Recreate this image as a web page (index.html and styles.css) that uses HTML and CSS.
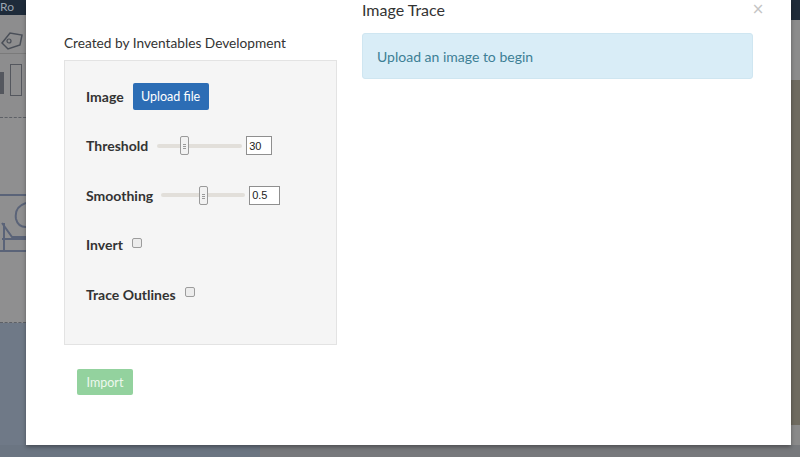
FILE: index.html
```html
<!DOCTYPE html>
<html lang="en">
<head>
    <meta charset="UTF-8">
    <meta name="viewport" content="width=device-width, initial-scale=1.0">
    <title>Image Trace</title>
    <link rel="stylesheet" href="styles.css">
</head>
<body>

    <div class="screen">
        <!-- dimmed app behind the modal -->
        <div class="app-left">
            <div class="app-topbar">Ro</div>
            <div class="app-toolbar">
                <svg width="26" height="38" viewBox="0 0 26 38">
                    <path d="M2 28 L10 18 L22 20 L20 30 L8 34 Z" fill="none" stroke="#4a4f58" stroke-width="1.5"/>
                    <circle cx="9" cy="26" r="2" fill="none" stroke="#4a4f58" stroke-width="1.2"/>
                </svg>
            </div>
            <div class="app-tools">
                <span class="tool-a"></span>
                <span class="tool-b"></span>
            </div>
            <div class="app-canvas">
                <svg width="26" height="90" viewBox="0 0 26 90">
                    <path d="M0 22 L26 22 M0 78 L26 78" stroke="#5a6378" stroke-width="2"/>
                    <path d="M26 30 Q14 34 16 46 Q18 54 26 54" fill="none" stroke="#5a6378" stroke-width="2"/>
                    <path d="M2 50 L12 64 L26 64 M2 66 L26 66 M4 50 L4 78" fill="none" stroke="#5a6378" stroke-width="2"/>
                </svg>
            </div>
            <div class="app-footer"></div>
        </div>

        <div class="modal">
            <button class="close" type="button">&times;</button>

            <div class="col-left">
                <p class="credit">Created by Inventables Development</p>

                <div class="panel">
                    <div class="row">
                        <label>Image</label>
                        <button class="btn btn-primary" type="button">Upload file</button>
                    </div>
                    <div class="row">
                        <label for="threshold">Threshold</label>
                        <input class="slider slider-threshold" type="range" id="threshold" min="0" max="100" value="30">
                        <input class="num num-threshold" type="text" value="30">
                    </div>
                    <div class="row">
                        <label for="smoothing">Smoothing</label>
                        <input class="slider slider-smoothing" type="range" id="smoothing" min="0" max="1" step="0.1" value="0.5">
                        <input class="num num-smoothing" type="text" value="0.5">
                    </div>
                    <div class="row">
                        <label for="invert">Invert</label>
                        <input class="check" type="checkbox" id="invert">
                    </div>
                    <div class="row">
                        <label for="outlines">Trace Outlines</label>
                        <input class="check" type="checkbox" id="outlines">
                    </div>
                </div>

                <button class="btn btn-success" type="button" disabled>Import</button>
            </div>

            <div class="col-right">
                <h4 class="title">Image Trace</h4>
                <div class="alert">Upload an image to begin</div>
            </div>
        </div>

        <div class="app-right">
            <div class="r-top"></div>
            <div class="r-gray"></div>
            <div class="r-brown"></div>
            <div class="r-bottom"></div>
        </div>
    </div>

    <div class="app-bottom">
        <div class="b-left"></div>
        <div class="b-right"></div>
    </div>

</body>
</html>
```

FILE: styles.css
```css
html, body {
    margin: 0;
    padding: 0;
}

body {
    font-family: Lato, "Open Sans", sans-serif;
    width: 800px;
    height: 457px;
    overflow: hidden;
    background-color: #6c7682;
    color: #333;
}

.screen {
    display: flex;
    height: 445px;
}

/* ---- app behind the modal ---- */

.app-left {
    width: 26px;
    display: flex;
    flex-direction: column;
    background-color: #8d8d8e;
}

.app-topbar {
    height: 15px;
    background-color: #1e2b3a;
    color: #9aa4b0;
    font-size: 12px;
    line-height: 14px;
    overflow: hidden;
}

.app-toolbar {
    height: 38px;
    border-bottom: 1px solid #7a7a7a;
}

.app-tools {
    height: 64px;
    display: flex;
    gap: 6px;
    padding-top: 10px;
    box-sizing: border-box;
    border-bottom: 1px dashed #5d6066;
}

.tool-a {
    width: 4px;
    height: 22px;
    margin-top: 8px;
    background-color: #54575e;
}

.tool-b {
    width: 10px;
    height: 30px;
    border: 1px solid #54575e;
}

.app-canvas {
    height: 205px;
    padding-top: 55px;
    box-sizing: border-box;
    border-bottom: 1px dashed #5d6066;
    background-color: #8f8f90;
}

.app-footer {
    flex: 1;
    background-color: #6f7987;
}

.app-right {
    width: 9px;
    display: flex;
    flex-direction: column;
}

.r-top {
    height: 20px;
    background-color: #1f2b39;
}

.r-gray {
    height: 60px;
    background-color: #8c8c8c;
}

.r-brown {
    height: 345px;
    background-color: #6f6b60;
}

.r-bottom {
    flex: 1;
    background-color: #8a8a8a;
}

.app-bottom {
    display: flex;
    height: 12px;
}

.b-left {
    width: 260px;
    background-color: #6b7582;
}

.b-right {
    flex: 1;
    background-color: #77797c;
}

/* ---- modal ---- */

.modal {
    position: relative;
    width: 766px;
    background: white;
    display: flex;
    gap: 25px;
    padding: 0 38px;
    box-sizing: border-box;
    box-shadow: 0 2px 4px rgba(0, 0, 0, 0.35);
}

.close {
    position: absolute;
    top: 0;
    right: 24px;
    width: 18px;
    height: 18px;
    border: none;
    background: none;
    padding: 0;
    font-family: "DejaVu Sans", sans-serif;
    font-size: 15px;
    line-height: 17px;
    text-align: center;
    color: #c4c4c4;
}

.col-left {
    width: 273px;
    padding-top: 33px;
}

.credit {
    margin: 0;
    font-size: 13.7px;
    line-height: 20px;
    color: #333;
}

.panel {
    margin-top: 7px;
    height: 285px;
    box-sizing: border-box;
    padding: 20px 21px 0;
    background-color: #f5f5f5;
    border: 1px solid #e3e3e3;
    display: flex;
    flex-direction: column;
    gap: 19.5px;
}

.row {
    height: 30px;
    display: flex;
    align-items: center;
}

.row label {
    font-weight: bold;
    font-size: 14px;
    color: #333;
    margin-right: 9px;
}

.btn {
    font-family: Lato, sans-serif;
    font-size: 12.5px;
    color: white;
    border: none;
    border-radius: 2px;
}

.btn-primary {
    width: 76px;
    height: 27px;
    background-color: #2c6db5;
    padding: 0;
}

.btn-success {
    margin: 24px 0 0 13px;
    width: 56px;
    height: 26px;
    padding: 0;
    background-color: #93d29e;
    color: #eef8ee;
}

.slider {
    -webkit-appearance: none;
    appearance: none;
    height: 19px;
    margin: 0 4px 0 0;
    background: transparent;
}

.slider-threshold {
    width: 85px;
}

.slider-smoothing {
    width: 84px;
    margin-left: -1px;
}

.slider::-webkit-slider-runnable-track {
    height: 4px;
    background-color: #e2dfda;
    border-radius: 2px;
}

.slider::-webkit-slider-thumb {
    -webkit-appearance: none;
    width: 9px;
    height: 19px;
    margin-top: -7.5px;
    box-sizing: border-box;
    border: 1px solid #9a9a9a;
    border-radius: 2px;
    background:
        linear-gradient(#9a9a9a, #9a9a9a) center 7px / 3px 1px no-repeat,
        linear-gradient(#9a9a9a, #9a9a9a) center 9px / 3px 1px no-repeat,
        linear-gradient(#9a9a9a, #9a9a9a) center 11px / 3px 1px no-repeat,
        #f2f2f2;
}

.num {
    height: 19px;
    box-sizing: border-box;
    border: 1px solid #8f8f8f;
    background: white;
    font-family: "Liberation Sans", Arial, sans-serif;
    font-size: 11px;
    padding: 0 2px;
    color: #222;
}

.num-threshold {
    width: 26px;
}

.num-smoothing {
    width: 31px;
}

.check {
    -webkit-appearance: none;
    appearance: none;
    width: 10px;
    height: 10px;
    margin: 0 0 4px;
    border: 1px solid #9c9c9c;
    border-radius: 2px;
    background-color: #ececec;
}

.col-right {
    flex: 1;
}

.title {
    margin: 0;
    font-size: 16px;
    font-weight: normal;
    line-height: 20px;
    color: #333;
}

.alert {
    margin-top: 13px;
    height: 46px;
    box-sizing: border-box;
    padding: 0 14px;
    display: flex;
    align-items: center;
    background-color: #d9edf7;
    border: 1px solid #cfe6f1;
    border-radius: 3px;
    color: #3d7f95;
    font-size: 14px;
}
```
